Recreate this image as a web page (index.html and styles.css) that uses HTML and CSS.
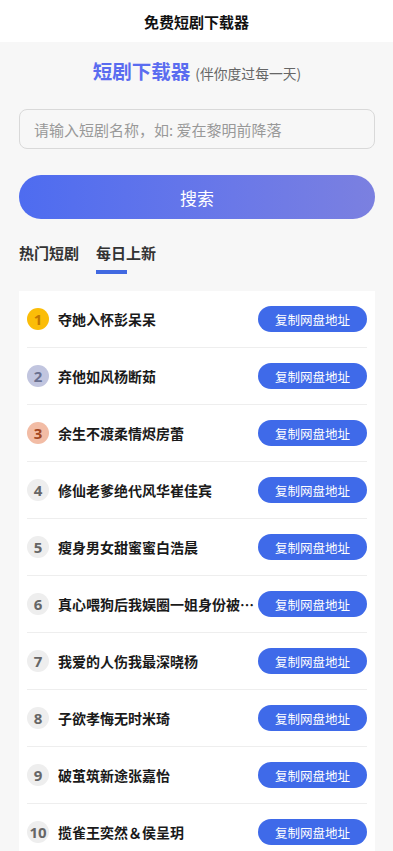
FILE: index.html
```html
<!DOCTYPE html>
<html lang="zh-CN">
<head>
<meta charset="utf-8">
<meta name="viewport" content="width=device-width, initial-scale=1">
<title>免费短剧下载器</title>
<link rel="stylesheet" href="styles.css">
</head>
<body>
<header class="topbar">免费短剧下载器</header>
<main class="page">
  <div class="brand">
    <span class="brand-name">短剧下载器</span>
    <span class="brand-sub">(伴你度过每一天)</span>
  </div>
  <input class="search-input" type="text" placeholder="请输入短剧名称，如: 爱在黎明前降落">
  <button class="search-btn" type="button">搜索</button>
  <nav class="tabs">
    <span class="tab">热门短剧</span>
    <span class="tab tab-active">每日上新</span>
  </nav>
  <ul class="list">
    <li class="row"><span class="rank rank-1">1</span><span class="name">夺她入怀彭呆呆</span><button class="copy" type="button">复制网盘地址</button></li>
    <li class="row"><span class="rank rank-2">2</span><span class="name">弃他如风杨断茹</span><button class="copy" type="button">复制网盘地址</button></li>
    <li class="row"><span class="rank rank-3">3</span><span class="name">余生不渡柔情烬房蕾</span><button class="copy" type="button">复制网盘地址</button></li>
    <li class="row"><span class="rank">4</span><span class="name">修仙老爹绝代风华崔佳宾</span><button class="copy" type="button">复制网盘地址</button></li>
    <li class="row"><span class="rank">5</span><span class="name">瘦身男女甜蜜蜜白浩晨</span><button class="copy" type="button">复制网盘地址</button></li>
    <li class="row"><span class="rank">6</span><span class="name">真心喂狗后我娱圈一姐身份被曝光</span><button class="copy" type="button">复制网盘地址</button></li>
    <li class="row"><span class="rank">7</span><span class="name">我爱的人伤我最深晓杨</span><button class="copy" type="button">复制网盘地址</button></li>
    <li class="row"><span class="rank">8</span><span class="name">子欲孝悔无时米琦</span><button class="copy" type="button">复制网盘地址</button></li>
    <li class="row"><span class="rank">9</span><span class="name">破茧筑新途张嘉怡</span><button class="copy" type="button">复制网盘地址</button></li>
    <li class="row"><span class="rank">10</span><span class="name">揽雀王奕然＆侯呈玥</span><button class="copy" type="button">复制网盘地址</button></li>
  </ul>
</main>
</body>
</html>
```

FILE: styles.css
```css
* { box-sizing: border-box; }
html, body {
  margin: 0;
  padding: 0;
  background: #f7f7f7;
  font-family: "Noto Sans CJK SC", "Noto Sans", sans-serif;
  color: #222;
}
.topbar {
  height: 42px;
  background: #fff;
  display: flex;
  align-items: center;
  justify-content: center;
  font-size: 15px;
  font-weight: 700;
  color: #111;
}
.page {
  padding: 14px 18px 0 19px;
  display: flex;
  flex-direction: column;
}
.brand {
  display: flex;
  align-items: baseline;
  justify-content: center;
  gap: 5px;
  height: 30px;
}
.brand-name {
  font-size: 19.5px;
  font-weight: 700;
  color: #5a6cf0;
}
.brand-sub {
  font-size: 13.8px;
  color: #666;
}
.search-input {
  margin-top: 23px;
  height: 40px;
  width: 100%;
  border: 1px solid #d9d9d9;
  border-radius: 8px;
  background: #f7f7f7;
  padding: 0 14px;
  font-family: inherit;
  font-size: 15px;
  color: #333;
  outline: none;
}
.search-input::placeholder { color: #999; }
.search-btn {
  margin-top: 26px;
  height: 44px;
  width: 100%;
  border: none;
  border-radius: 22px;
  background: linear-gradient(90deg, #4e6cf0 0%, #6a78e8 60%, #7b80e0 100%);
  color: #fff;
  font-family: inherit;
  font-size: 17px;
}
.tabs {
  margin-top: 24px;
  display: flex;
  gap: 17px;
  height: 35px;
}
.tab {
  font-size: 15px;
  font-weight: 700;
  color: #333;
  line-height: 20px;
  position: relative;
}
.tab-active::after {
  content: "";
  position: absolute;
  left: 0;
  top: 27px;
  width: 31px;
  height: 4px;
  background: #4169e1;
}
.list {
  list-style: none;
  margin: 13px 0 0;
  padding: 0 8px;
  background: #fff;
}
.row {
  height: 57px;
  display: flex;
  align-items: center;
  border-bottom: 1px solid #eee;
}
.rank {
  flex: none;
  width: 22px;
  height: 22px;
  border-radius: 50%;
  background: #eee;
  color: #666;
  font-family: "Noto Sans", sans-serif;
  font-size: 15px;
  font-weight: 700;
  display: flex;
  align-items: center;
  justify-content: center;
  margin-right: 9px;
}
.rank-1 { background: #fbbd08; color: #c27700; }
.rank-2 { background: #c1c5df; color: #6a7090; }
.rank-3 { background: #f2bca5; color: #a2471f; }
.name {
  flex: 1;
  min-width: 0;
  font-size: 14px;
  font-weight: 700;
  color: #1a1a1a;
  white-space: nowrap;
  overflow: hidden;
  text-overflow: ellipsis;
}
.copy {
  flex: none;
  width: 109px;
  height: 26px;
  border: none;
  border-radius: 13px;
  background: #3f6ae9;
  color: #fff;
  font-family: inherit;
  font-size: 12.5px;
  padding: 0;
}
```
